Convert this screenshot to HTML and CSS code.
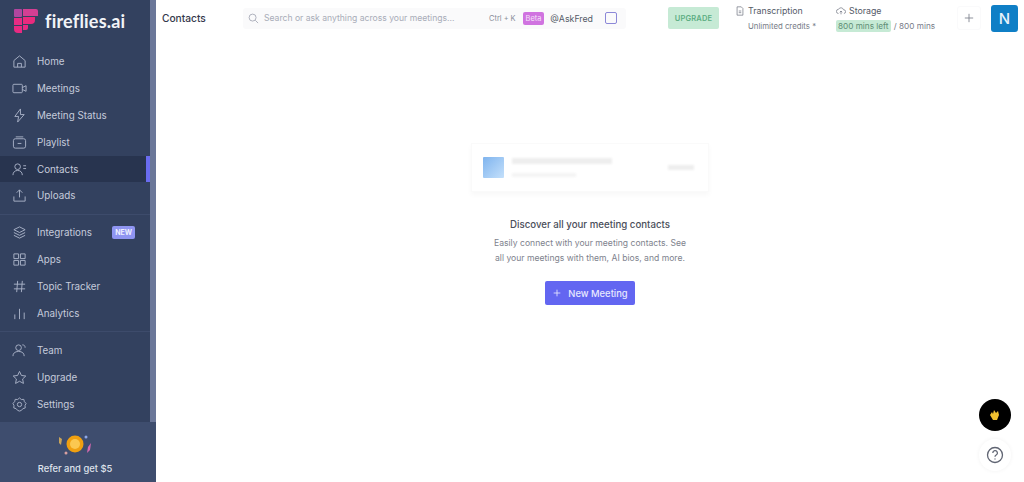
FILE: index.html
```html
<!DOCTYPE html>
<html>
<head>
  <meta charset="UTF-8">
  <title>Contacts - fireflies.ai</title>
  <link rel="stylesheet" href="styles.css">
</head>
<body>
  <div class="app">
    <!-- Sidebar -->
    <aside class="sidebar">
      <div class="sidebar-scroll">
        <div class="sidebar-inner">
          <div class="brand">
            <svg width="24" height="24" viewBox="0 0 24 24">
              <rect x="0" y="0" width="8" height="8" rx="1" fill="#b0469f"/>
              <path d="M9 0h13a2 2 0 0 1 2 2v5H9z" fill="#d43f93"/>
              <rect x="0" y="9" width="8" height="7" fill="#e62c84"/>
              <path d="M9 8h12v3a4 4 0 0 1-4 4H9z" fill="#ea2a7e"/>
              <path d="M0 17h8v7H4a4 4 0 0 1-4-4z" fill="#e82a82"/>
              <path d="M9 16h5v3a2 2 0 0 1-2 2H9z" fill="#e82a82"/>
            </svg>
            <span class="brand-name">fireflies.ai</span>
          </div>

          <nav class="nav-group">
            <a class="nav-item">
              <svg class="nav-icon" viewBox="0 0 16 16"><path d="M2 7l6-5 6 5v7H2zM6 14v-4h4v4"/></svg>
              Home
            </a>
            <a class="nav-item">
              <svg class="nav-icon" viewBox="0 0 16 16"><rect x="1" y="3.5" width="10" height="9" rx="1"/><path d="M11 7l4-2v6l-4-2"/></svg>
              Meetings
            </a>
            <a class="nav-item">
              <svg class="nav-icon" viewBox="0 0 16 16"><path d="M9 1L3 9h4l-1 6 7-8H9z"/></svg>
              Meeting Status
            </a>
            <a class="nav-item">
              <svg class="nav-icon" viewBox="0 0 16 16"><rect x="1.5" y="4" width="13" height="10" rx="2"/><path d="M4 2h8M6 9h4"/></svg>
              Playlist
            </a>
            <a class="nav-item active">
              <svg class="nav-icon" viewBox="0 0 16 16"><circle cx="6" cy="5" r="3"/><path d="M1 14c0-3 2-5 5-5s5 2 5 5M12 4h3M12 7h3"/></svg>
              Contacts
            </a>
            <a class="nav-item">
              <svg class="nav-icon" viewBox="0 0 16 16"><path d="M8 10V2M5 5l3-3 3 3M2 9v5h12V9"/></svg>
              Uploads
            </a>
          </nav>

          <nav class="nav-group">
            <a class="nav-item">
              <svg class="nav-icon" viewBox="0 0 16 16"><path d="M8 2l6 3-6 3-6-3zM2 8l6 3 6-3M2 11l6 3 6-3"/></svg>
              Integrations
              <span class="badge-new">NEW</span>
            </a>
            <a class="nav-item">
              <svg class="nav-icon" viewBox="0 0 16 16"><path d="M2 2h5v5H2zM9 2h5v5H9zM2 9h5v5H2zM9 9h5v5H9z"/></svg>
              Apps
            </a>
            <a class="nav-item">
              <svg class="nav-icon" viewBox="0 0 16 16"><path d="M6 2L5 14M11 2l-1 12M2 5.5h12M2 10.5h12"/></svg>
              Topic Tracker
            </a>
            <a class="nav-item">
              <svg class="nav-icon" viewBox="0 0 16 16"><path d="M3 14V9M8 14V3M13 14V7"/></svg>
              Analytics
            </a>
          </nav>

          <nav class="nav-group last">
            <a class="nav-item">
              <svg class="nav-icon" viewBox="0 0 16 16"><circle cx="7" cy="5" r="3"/><path d="M1 14c0-3 2-5 6-5s6 2 6 5M11 2c2 0 3 1 3 3"/></svg>
              Team
            </a>
            <a class="nav-item">
              <svg class="nav-icon" viewBox="0 0 16 16"><path d="M8 1.5l2 4.300 4.700.6-3.400 3.200.9 4.700L8 12l-4.200 2.300.9-4.700L1.300 6.400 6 5.800z"/></svg>
              Upgrade
            </a>
            <a class="nav-item">
              <svg class="nav-icon" viewBox="0 0 16 16"><circle cx="8" cy="8" r="2.3"/><path d="M8 1l2 1.700 2.600-.2.600 2.500 1.800 1.800-1.100 2.300.2 2.600-2.500.7L10 14.300 8 15l-2-.7-1.600-1.900-2.500-.7.2-2.600L1 6.800 2.800 5l.6-2.500 2.600.2z"/></svg>
              Settings
            </a>
          </nav>
        </div>
        <div class="scrollbar"></div>
      </div>

      <div class="refer">
        <svg width="36" height="26" viewBox="0 0 36 26">
          <path d="M2 5l3 2-1 6-2-2z" fill="#c9a45a"/>
          <path d="M34 11l-1 7-3 3 1-6z" fill="#d768b0"/>
          <circle cx="29" cy="5" r="1.5" fill="#8fa8e8"/>
          <circle cx="9" cy="21" r="1.5" fill="#d8a0a0"/>
          <circle cx="18" cy="12" r="8.5" fill="#f0a010"/>
          <circle cx="18" cy="12" r="5" fill="#fbc850"/>
        </svg>
        <span>Refer and get $5</span>
      </div>
    </aside>

    <div class="main">
      <!-- Top bar -->
      <header class="topbar">
        <div class="page-title">Contacts</div>
        <div class="search">
          <svg class="search-icon" viewBox="0 0 12 12"><circle cx="5" cy="5" r="3.8"/><path d="M8 8l3 3"/></svg>
          <span class="search-text">Search or ask anything across your meetings...</span>
          <span class="search-key">Ctrl + K</span>
          <span class="badge-beta">Beta</span>
          <span class="ask-fred">@AskFred</span>
          <span class="square"></span>
        </div>
        <button class="upgrade-btn">UPGRADE</button>
        <div class="usage usage-transcription">
          <div class="usage-title">
            <svg viewBox="0 0 12 12"><path d="M2.5 1h5l2 2v8h-7zM4.5 6h3M4.5 8h3"/></svg>
            Transcription
          </div>
          <div class="usage-sub">Unlimited credits *</div>
        </div>
        <div class="usage usage-storage">
          <div class="usage-title">
            <svg viewBox="0 0 12 12"><path d="M3 9a2.500 2.500 0 0 1 0-5 3.200 3.200 0 0 1 6 .5A2.200 2.200 0 0 1 9.500 9M6 10V6M4.500 7.500L6 6l1.500 1.500"/></svg>
            Storage
          </div>
          <div class="usage-sub"><span class="mins-left">800 mins left</span> / 800 mins</div>
        </div>
        <div class="plus-btn">
          <svg viewBox="0 0 12 12"><path d="M6 1v10M1 6h10"/></svg>
        </div>
        <div class="avatar">N</div>
      </header>

      <!-- Empty state -->
      <section class="empty">
        <div class="ghost-card">
          <div class="ghost-thumb"></div>
          <div class="ghost-lines">
            <div class="ghost-line long"></div>
            <div class="ghost-line short"></div>
          </div>
          <div class="ghost-line tag"></div>
        </div>
        <h3 class="empty-title">Discover all your meeting contacts</h3>
        <p class="empty-text">Easily connect with your meeting contacts. See<br>all your meetings with them, AI bios, and more.</p>
        <button class="new-meeting">
          <svg viewBox="0 0 12 12"><path d="M6 2v8M2 6h8"/></svg>
          New Meeting
        </button>
      </section>
    </div>
  </div>

  <div class="fab fab-dark">
    <svg width="12" height="12" viewBox="0 0 12 12"><path d="M1 6l2-3 1 2 1-4 2 3 2-2 1 4-2 5H4z" fill="#f2c230"/></svg>
  </div>
  <div class="fab fab-help">
    <svg width="18" height="18" viewBox="0 0 18 18">
      <circle cx="9" cy="9" r="7.5"/>
      <path d="M6.800 7a2.300 2.300 0 1 1 3.400 2c-.8.500-1.200.9-1.200 1.800M9 12.500v1"/>
    </svg>
  </div>
</body>
</html>
```

FILE: styles.css
```css
* {
  box-sizing: border-box;
}

html, body {
  margin: 0;
  height: 100%;
  overflow: hidden;
}

body {
  font-family: 'Inter', 'Liberation Sans', sans-serif;
  background: #fff;
  color: #33384a;
}

.app {
  display: flex;
  height: 482px;
}

/* Sidebar */
.sidebar {
  width: 156px;
  flex-shrink: 0;
  display: flex;
  flex-direction: column;
  background: #33415f;
}

.sidebar-scroll {
  flex: 1;
  display: flex;
  min-height: 0;
}

.sidebar-inner {
  flex: 1;
}

.scrollbar {
  width: 6px;
  background: #6b7799;
}

.brand {
  display: flex;
  align-items: center;
  gap: 7px;
  height: 42px;
  margin-bottom: 6px;
  padding-left: 14px;
}

.brand-name {
  font-family: 'Lato', sans-serif;
  font-size: 18px;
  font-weight: 700;
  letter-spacing: 0.2px;
  color: #f2f4f8;
}

.nav-group {
  padding-bottom: 4.5px;
  margin-bottom: 4.5px;
  border-bottom: 1px solid #3d4b6b;
}

.nav-group.last {
  border-bottom: none;
  margin-bottom: 0;
}

.nav-item {
  display: flex;
  align-items: center;
  gap: 10px;
  height: 26.9px;
  padding-left: 12px;
  font-size: 9.8px;
  color: #c5cbdb;
  position: relative;
}

.nav-item.active {
  background: #28344f;
}

.nav-item.active::after {
  content: "";
  position: absolute;
  right: 0;
  top: 0;
  bottom: 0;
  width: 4px;
  background: #6a6cf0;
}

.nav-icon {
  width: 15px;
  height: 15px;
  fill: none;
  stroke: #aab2c8;
  stroke-width: 1;
}

.badge-new {
  margin-left: auto;
  margin-right: 15px;
  background: #8f95f2;
  color: #eef0ff;
  font-size: 7px;
  font-weight: 700;
  padding: 2px 3px;
  border-radius: 2px;
}

.refer {
  height: 60px;
  background: #3e4d6e;
  display: flex;
  flex-direction: column;
  align-items: center;
  justify-content: flex-end;
  gap: 5px;
  padding: 0 6px 8px 0;
  font-size: 9.4px;
  font-weight: 500;
  color: #dfe3ec;
}

/* Top bar */
.main {
  flex: 1;
  min-width: 0;
}

.topbar {
  display: flex;
  align-items: center;
  height: 36px;
  padding-left: 6px;
}

.page-title {
  width: 81px;
  font-size: 10.2px;
  font-weight: 500;
  color: #33384a;
}

.search {
  width: 383px;
  height: 21px;
  display: flex;
  align-items: center;
  padding: 0 9px 0 5px;
  background: #fafafb;
  border-radius: 3px;
  font-size: 8.6px;
  color: #a8acb8;
}

.search-icon {
  width: 11px;
  height: 11px;
  fill: none;
  stroke: #a8acb8;
  margin-right: 5px;
}

.search-text {
  flex: 1;
  white-space: nowrap;
}

.search-key {
  font-size: 7.4px;
  color: #8a8e9a;
  margin-right: 7px;
}

.badge-beta {
  background: #d073e0;
  color: #f5e4f8;
  font-size: 7.4px;
  padding: 2px 3px;
  border-radius: 2px;
  margin-right: 6px;
}

.ask-fred {
  font-size: 8.8px;
  color: #555a68;
  margin-right: 12px;
}

.square {
  width: 12px;
  height: 12px;
  border: 1.5px solid #8c88d8;
  border-radius: 2px;
}

.upgrade-btn {
  width: 51px;
  height: 22px;
  margin-left: 42px;
  padding: 0;
  border: none;
  border-radius: 2px;
  background: #c6ead5;
  color: #5cae83;
  font-family: inherit;
  font-size: 7.5px;
  font-weight: 600;
  letter-spacing: 0.2px;
}

.usage {
  font-size: 8.8px;
  color: #555a68;
}

.usage-transcription {
  margin-left: 16px;
  width: 101px;
}

.usage-storage {
  width: 121px;
}

.usage-title {
  display: flex;
  align-items: center;
  gap: 3px;
  margin-bottom: 5px;
}

.usage-title svg {
  width: 10px;
  height: 10px;
  fill: none;
  stroke: #666b78;
  stroke-width: 0.8;
}

.usage-sub {
  font-size: 7.8px;
  color: #777b87;
}

.usage-storage .usage-sub {
  font-size: 8.2px;
}

.usage-transcription .usage-sub {
  padding-left: 13px;
}

.mins-left {
  background: #c6ead5;
  color: #5e8d74;
  padding: 1px 2px;
  border-radius: 2px;
  margin-right: 1px;
}

.plus-btn {
  width: 24px;
  height: 24px;
  display: flex;
  align-items: center;
  justify-content: center;
  border: 1px solid #fafafb;
  border-radius: 3px;
  margin-right: 10px;
}

.plus-btn svg {
  width: 10px;
  height: 10px;
  fill: none;
  stroke: #777b87;
}

.avatar {
  width: 27px;
  height: 27px;
  border-radius: 3px;
  background: #0f7fc6;
  color: #e8f3fb;
  font-size: 15px;
  font-weight: 500;
  display: flex;
  align-items: center;
  justify-content: center;
}

/* Empty state */
.empty {
  display: flex;
  flex-direction: column;
  align-items: center;
  padding-top: 107px;
}

.ghost-card {
  width: 238px;
  height: 49px;
  display: flex;
  align-items: center;
  padding: 0 14px 0 11px;
  background: #fff;
  border: 1px solid #fafafa;
  box-shadow: 0 3px 5px rgba(0, 0, 0, 0.03);
  margin-bottom: 26px;
}

.ghost-thumb {
  width: 21px;
  height: 21px;
  background: linear-gradient(135deg, #7fb4ee, #c4e0fb);
  border-radius: 1px;
  margin-right: 8px;
}

.ghost-lines {
  flex: 1;
}

.ghost-line {
  height: 5px;
  background: #eeeeee;
  filter: blur(1px);
}

.ghost-line.long {
  width: 100px;
  height: 6px;
  margin-bottom: 9px;
}

.ghost-line.short {
  width: 64px;
  height: 4px;
  background: #f4f4f4;
}

.ghost-line.tag {
  width: 26px;
  height: 5px;
}

.empty-title {
  margin: 0 0 5px;
  font-size: 9.7px;
  font-weight: 500;
  line-height: 13px;
  color: #4a4e5a;
}

.empty-text {
  margin: 0 0 15px;
  font-size: 8.6px;
  line-height: 15px;
  text-align: center;
  color: #7e828d;
}

.new-meeting {
  width: 90px;
  height: 24px;
  display: flex;
  align-items: center;
  justify-content: center;
  gap: 6px;
  padding: 0;
  border: none;
  border-radius: 2px;
  background: #6366f1;
  color: #e8e9ff;
  font-family: inherit;
  font-size: 9.4px;
  font-weight: 500;
}

.new-meeting svg {
  width: 10px;
  height: 10px;
  fill: none;
  stroke: #e8e9ff;
}

/* Floating buttons */
.fab {
  position: fixed;
  width: 32px;
  height: 32px;
  right: 13px;
  border-radius: 50%;
  display: flex;
  align-items: center;
  justify-content: center;
}

.fab-dark {
  top: 399px;
  background: #000;
}

.fab-help {
  top: 439px;
  background: #fff;
  box-shadow: 0 0 4px rgba(0, 0, 0, 0.06);
}

.fab-help svg {
  fill: none;
  stroke: #5f6472;
  stroke-width: 1.3;
}
```
